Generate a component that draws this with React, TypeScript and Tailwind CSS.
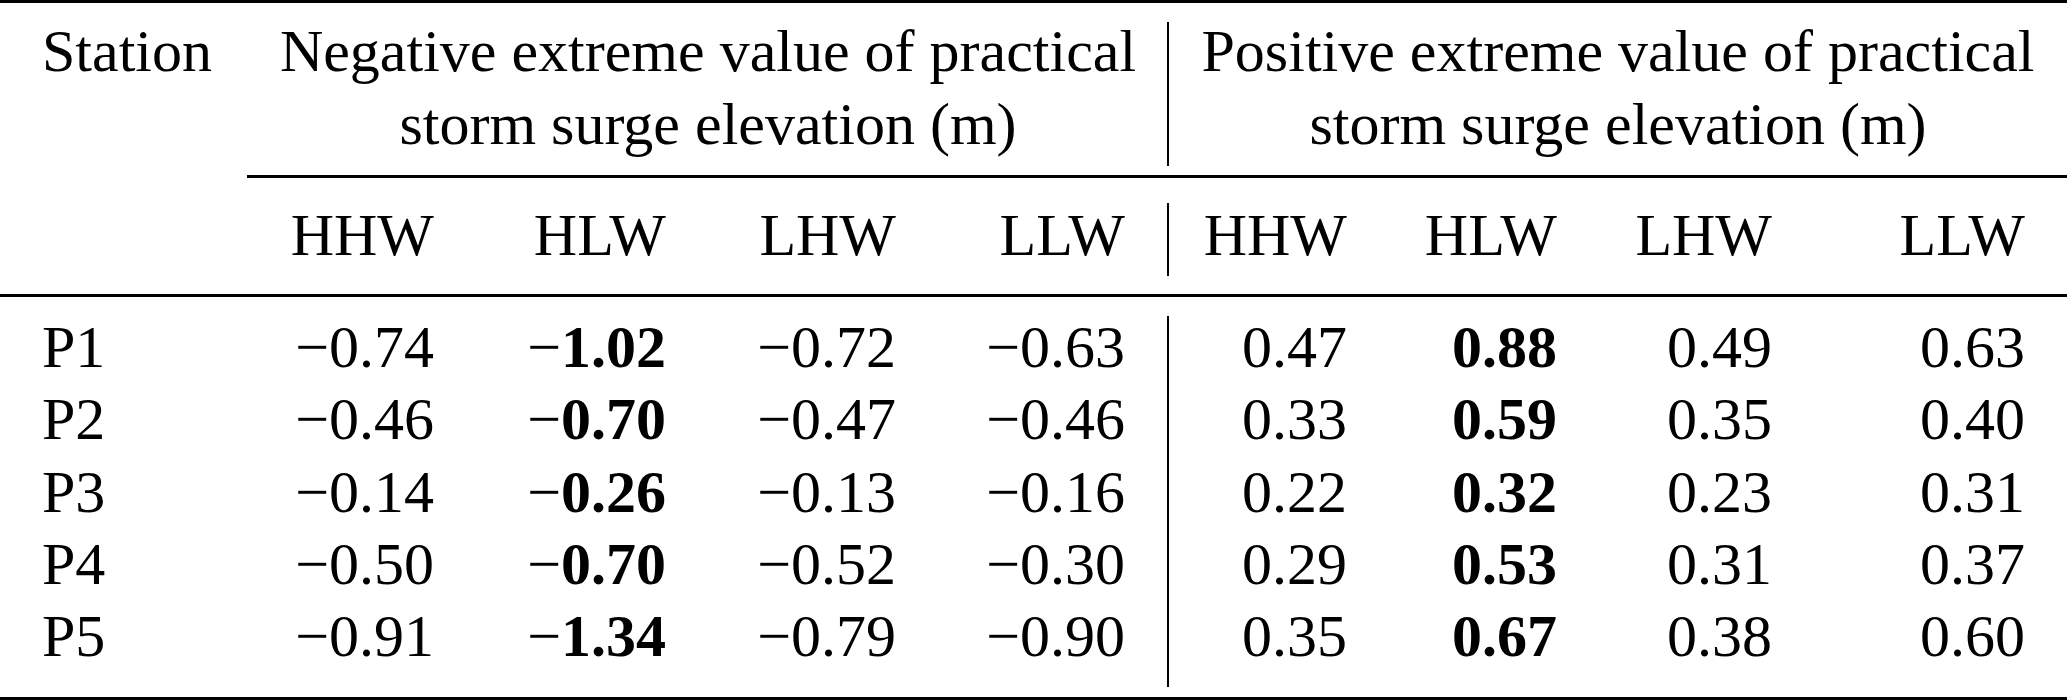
import type { ReactNode } from "react";

type Row = {
  station: string;
  neg: [string, string, string, string];
  pos: [string, string, string, string];
};

const rows: Row[] = [
  { station: "P1", neg: ["0.74", "1.02", "0.72", "0.63"], pos: ["0.47", "0.88", "0.49", "0.63"] },
  { station: "P2", neg: ["0.46", "0.70", "0.47", "0.46"], pos: ["0.33", "0.59", "0.35", "0.40"] },
  { station: "P3", neg: ["0.14", "0.26", "0.13", "0.16"], pos: ["0.22", "0.32", "0.23", "0.31"] },
  { station: "P4", neg: ["0.50", "0.70", "0.52", "0.30"], pos: ["0.29", "0.53", "0.31", "0.37"] },
  { station: "P5", neg: ["0.91", "1.34", "0.79", "0.90"], pos: ["0.35", "0.67", "0.38", "0.60"] },
];

const tides = ["HHW", "HLW", "LHW", "LLW"];

// left block = Station + negative group, right block = positive group
const leftCols = "grid grid-cols-[249px_227px_232px_230px_229px]";
const rightCols = "grid grid-cols-[220px_210px_215px_253px]";

function Num({ children }: { children: ReactNode }) {
  return <div className="pr-[42px] text-right whitespace-nowrap">{children}</div>;
}

function Rule() {
  return <div className="h-[3px] w-full bg-black" />;
}

function negCell(v: string, bold: boolean) {
  return bold ? (
    <>
      −<b className="font-bold">{v}</b>
    </>
  ) : (
    `−${v}`
  );
}

export default function App() {
  return (
    <div className="w-[2067px] h-[700px] bg-white text-black font-['Liberation_Serif','Times_New_Roman',serif] text-[60px]">
      <Rule />

      {/* group headings */}
      <div className="flex h-[172px] leading-[73px]">
        <div className="flex w-[1167px] pt-[12px]">
          <div className="w-[249px] pl-[42px]">Station</div>
          <div className="w-[918px] text-center">
            Negative extreme value of practical
            <br />
            storm surge elevation (m)
          </div>
        </div>
        <div className="mt-[19px] h-[144px] w-[2px] bg-black" />
        <div className="w-[898px] pt-[12px] text-center">
          Positive extreme value of practical
          <br />
          storm surge elevation (m)
        </div>
      </div>

      <div className="flex">
        <div className="w-[247px]" />
        <div className="h-[3px] flex-1 bg-black" />
      </div>

      {/* tide sub-headings */}
      <div className="flex h-[116px] leading-[72px]">
        <div className={`${leftCols} w-[1167px] pt-[21px]`}>
          <div />
          {tides.map((t) => (
            <Num key={t}>{t}</Num>
          ))}
        </div>
        <div className="mt-[25px] h-[73px] w-[2px] bg-black" />
        <div className={`${rightCols} w-[898px] pt-[21px]`}>
          {tides.map((t) => (
            <Num key={t}>{t}</Num>
          ))}
        </div>
      </div>

      <Rule />

      {/* body */}
      <div className="flex h-[400px] leading-[72.25px]">
        <div className={`${leftCols} w-[1167px] content-start pt-[14px]`}>
          {rows.map((r) => (
            <div key={r.station} className="contents">
              <div className="pl-[42px]">{r.station}</div>
              {r.neg.map((v, i) => (
                <Num key={i}>{negCell(v, i === 1)}</Num>
              ))}
            </div>
          ))}
        </div>
        <div className="mt-[19px] h-[371px] w-[2px] bg-black" />
        <div className={`${rightCols} w-[898px] content-start pt-[14px]`}>
          {rows.map((r) => (
            <div key={r.station} className="contents">
              {r.pos.map((v, i) => (
                <Num key={i}>{i === 1 ? <b className="font-bold">{v}</b> : v}</Num>
              ))}
            </div>
          ))}
        </div>
      </div>

      <Rule />
    </div>
  );
}
